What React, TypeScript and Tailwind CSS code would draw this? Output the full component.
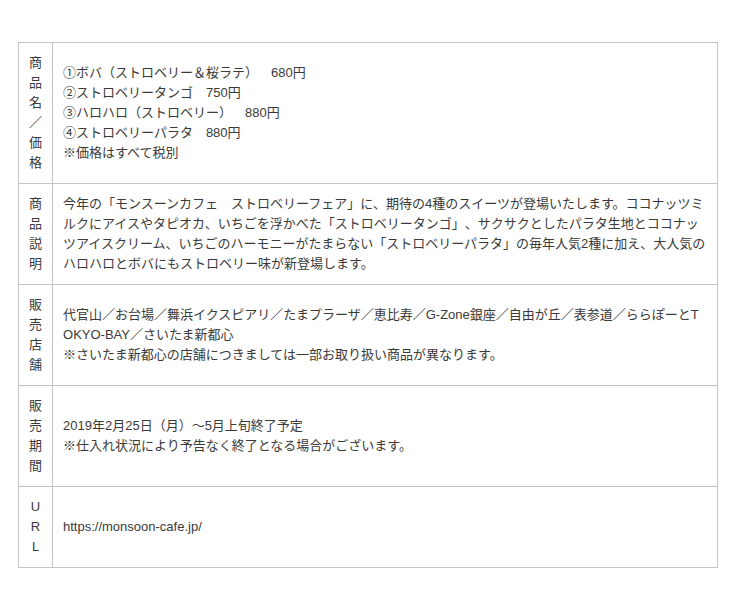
const rows: { head: string; lines: string[] }[] = [
  {
    head: "商品名／価格",
    lines: [
      "①ボバ（ストロベリー＆桜ラテ）　680円",
      "②ストロベリータンゴ　750円",
      "③ハロハロ（ストロベリー）　880円",
      "④ストロベリーパラタ　880円",
      "※価格はすべて税別",
    ],
  },
  {
    head: "商品説明",
    lines: [
      "今年の「モンスーンカフェ　ストロベリーフェア」に、期待の4種のスイーツが登場いたします。ココナッツミルクにアイスやタピオカ、いちごを浮かべた「ストロベリータンゴ」、サクサクとしたパラタ生地とココナッツアイスクリーム、いちごのハーモニーがたまらない「ストロベリーパラタ」の毎年人気2種に加え、大人気のハロハロとボバにもストロベリー味が新登場します。",
    ],
  },
  {
    head: "販売店舗",
    lines: [
      "代官山／お台場／舞浜イクスピアリ／たまプラーザ／恵比寿／G-Zone銀座／自由が丘／表参道／ららぽーとTOKYO-BAY／さいたま新都心",
      "※さいたま新都心の店舗につきましては一部お取り扱い商品が異なります。",
    ],
  },
  {
    head: "販売期間",
    lines: [
      "2019年2月25日（月）～5月上旬終了予定",
      "※仕入れ状況により予告なく終了となる場合がございます。",
    ],
  },
  {
    head: "URL",
    lines: ["https://monsoon-cafe.jp/"],
  },
];

export default function App() {
  return (
    <div className="min-h-screen bg-white pt-[42px] pl-[18px] text-[13px] leading-5 text-[#3a3a3a] [text-spacing-trim:space-all] font-['Liberation_Sans','Noto_Sans_CJK_JP',sans-serif]">
      <table className="w-[700px] border-collapse">
        <tbody>
          {rows.map((r) => (
            <tr key={r.head}>
              <td className="w-[34px] border border-[#c4c4c4] px-[10px] py-[10px] text-center align-middle">
                {r.head.split("").map((ch, i) => (
                  <div key={i}>{ch}</div>
                ))}
              </td>
              <td className="border border-[#c4c4c4] px-[10px] py-[10px] align-middle break-all">
                {r.lines.map((l, i) => (
                  <div key={i}>{l}</div>
                ))}
              </td>
            </tr>
          ))}
        </tbody>
      </table>
    </div>
  );
}
